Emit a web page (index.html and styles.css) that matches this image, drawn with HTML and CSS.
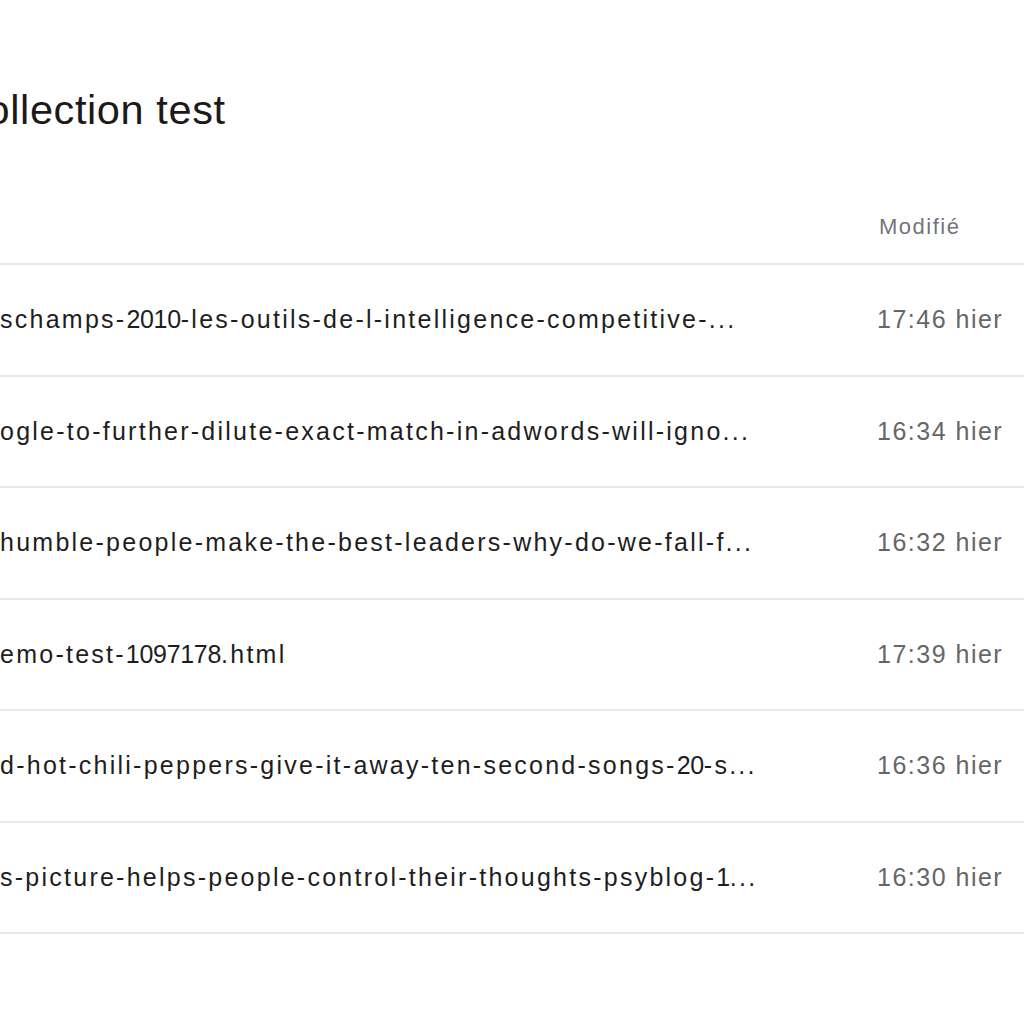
FILE: index.html
```html
<!DOCTYPE html>
<html lang="fr">
<head>
<meta charset="utf-8">
<title>Collection test</title>
<link rel="stylesheet" href="styles.css">
</head>
<body>
<div class="page">
  <h1 class="title">Collection test</h1>
  <div class="table">
    <div class="row head">
      <div class="cell name"></div>
      <div class="cell date">Modifié</div>
    </div>
    <div class="row">
      <div class="cell name">schamps-<span class="num">2010</span>-les-outils-de-l-intelligence-competitive-...</div>
      <div class="cell date">17:46 hier</div>
    </div>
    <div class="row">
      <div class="cell name">ogle-to-further-dilute-exact-match-in-adwords-will-igno...</div>
      <div class="cell date">16:34 hier</div>
    </div>
    <div class="row">
      <div class="cell name">humble-people-make-the-best-leaders-why-do-we-fall-f...</div>
      <div class="cell date">16:32 hier</div>
    </div>
    <div class="row">
      <div class="cell name">emo-test-<span class="num">1097178</span>.html</div>
      <div class="cell date">17:39 hier</div>
    </div>
    <div class="row">
      <div class="cell name">d-hot-chili-peppers-give-it-away-ten-second-songs-<span class="num">20</span>-s...</div>
      <div class="cell date">16:36 hier</div>
    </div>
    <div class="row">
      <div class="cell name">s-picture-helps-people-control-their-thoughts-psyblog-<span class="num">1</span>...</div>
      <div class="cell date">16:30 hier</div>
    </div>
  </div>
</div>
</body>
</html>
```

FILE: styles.css
```css
html, body {
  margin: 0;
  padding: 0;
  background: #ffffff;
  overflow: hidden;
}
body {
  font-family: "Liberation Sans", Arial, sans-serif;
  color: #1e1919;
}
.page {
  margin-left: -44px;
  width: 1068px;
}
.title {
  margin: 0;
  padding-top: 86px;
  font-size: 41.5px;
  line-height: 48px;
  font-weight: normal;
  letter-spacing: 0.6px;
  color: #1e1919;
}
.table {
  margin-top: 56px;
}
.row {
  display: grid;
  grid-template-columns: 1fr 147px;
  align-items: center;
  height: 109.5px;
  border-bottom: 2px solid #e8e8e8;
}
.row.head {
  height: 73px;
}
.cell {
  white-space: nowrap;
  overflow: hidden;
}
.name {
  padding-left: 44px;
  font-size: 25px;
  letter-spacing: 2.25px;
  color: #1e1e22;
}
.num {
  letter-spacing: -0.3px;
}
.date {
  font-size: 25px;
  letter-spacing: 1.5px;
  color: #666666;
}
.head .date {
  font-size: 22px;
  letter-spacing: 1.5px;
  color: #74747c;
  padding-left: 2px;
}
```
